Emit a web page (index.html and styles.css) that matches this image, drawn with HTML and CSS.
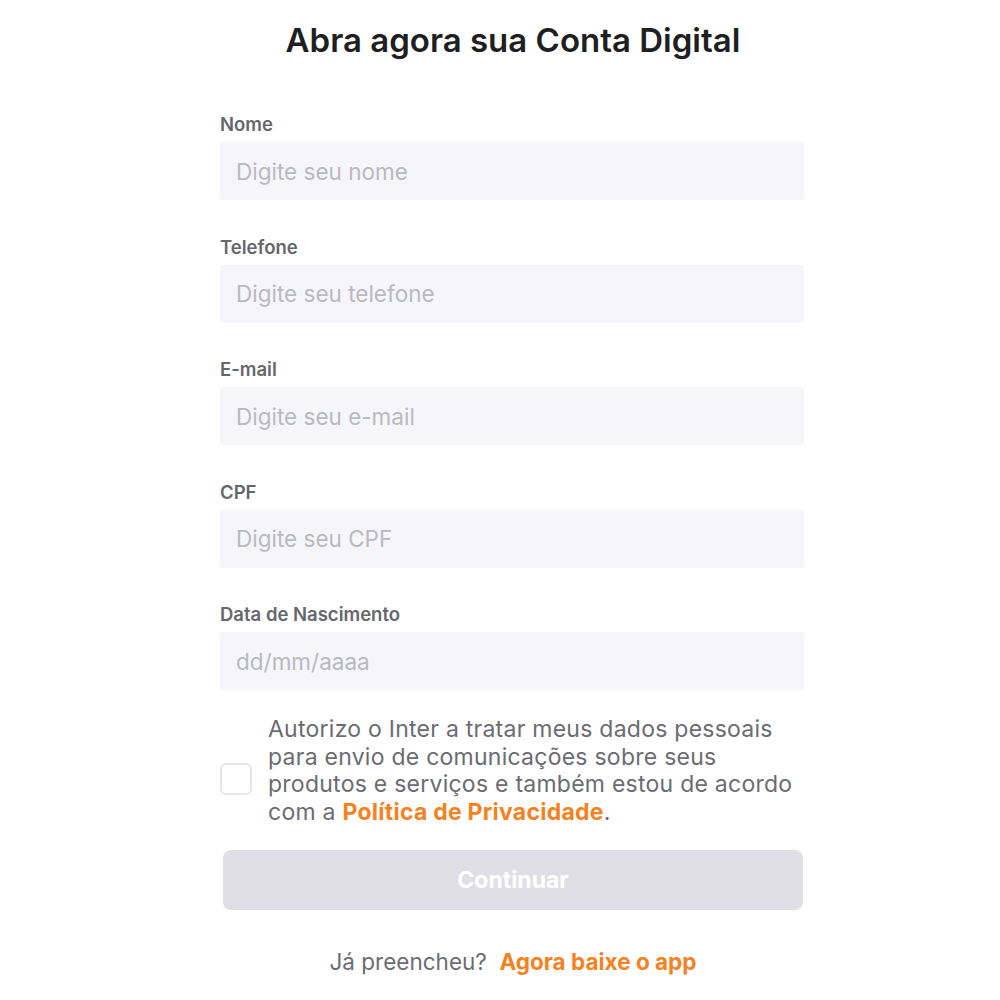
FILE: index.html
```html
<!DOCTYPE html>
<html lang="pt-BR">
<head>
<meta charset="utf-8">
<title>Abra agora sua Conta Digital</title>
<link rel="stylesheet" href="styles.css">
</head>
<body>
<main class="page">
  <h1 class="title">Abra agora sua Conta Digital</h1>
  <form class="form">
    <div class="field">
      <label class="label">Nome</label>
      <div class="input">Digite seu nome</div>
    </div>
    <div class="field">
      <label class="label">Telefone</label>
      <div class="input">Digite seu telefone</div>
    </div>
    <div class="field">
      <label class="label">E-mail</label>
      <div class="input">Digite seu e-mail</div>
    </div>
    <div class="field">
      <label class="label">CPF</label>
      <div class="input">Digite seu CPF</div>
    </div>
    <div class="field last">
      <label class="label">Data de Nascimento</label>
      <div class="input">dd/mm/aaaa</div>
    </div>
    <div class="consent">
      <span class="checkbox"></span>
      <p class="consent-text">Autorizo o Inter a tratar meus dados pessoais<br>para envio de comunicações sobre seus<br>produtos e serviços e também estou de acordo<br>com a <a class="link">Política de Privacidade</a>.</p>
    </div>
    <div class="button">Continuar</div>
    <p class="footer">Já preencheu?&nbsp; <a class="link">Agora baixe o app</a></p>
  </form>
</main>
</body>
</html>
```
FILE: styles.css
```css
* { box-sizing: border-box; }
html, body { margin: 0; padding: 0; background: #ffffff; }
body { font-family: Inter, "Noto Sans", sans-serif; }
.page {
  width: 1000px;
  padding-left: 26px;
  display: flex;
  flex-direction: column;
  align-items: center;
}
.title {
  margin: 20px 0 0 0;
  font-size: 33px;
  line-height: 40px;
  font-weight: 600;
  color: #1f1f22;
}
.form {
  width: 586px;
  margin-top: 53px;
  display: flex;
  flex-direction: column;
}
.field {
  display: flex;
  flex-direction: column;
  margin-bottom: 35.5px;
}
.field.last { margin-bottom: 26px; }
.label {
  font-size: 18.5px;
  line-height: 22px;
  font-weight: 600;
  color: #66676d;
  margin-bottom: 7px;
}
.input {
  height: 58px;
  width: 584px;
  background: #f5f5fa;
  border-radius: 4px;
  padding: 0 16px;
  display: flex;
  align-items: center;
  font-size: 22.5px;
  color: #b9bac1;
}
.consent {
  display: flex;
  align-items: center;
  gap: 16px;
}
.checkbox {
  flex: none;
  width: 32px;
  height: 32px;
  margin-top: 15px;
  border: 2px solid #e6e6ea;
  border-radius: 6px;
}
.consent-text {
  margin: 0;
  font-size: 23px;
  line-height: 27.5px;
  letter-spacing: 0.25px;
  color: #6b6c72;
  white-space: nowrap;
}
.link {
  color: #f5821f;
  font-weight: 700;
}
.button {
  margin: 24px 3px 0 3px;
  width: 580px;
  height: 60px;
  background: #dfdfe5;
  border-radius: 8px;
  display: flex;
  align-items: center;
  justify-content: center;
  color: #ffffff;
  font-weight: 700;
  font-size: 23px;
}
.footer {
  margin: 38px 0 0 0;
  text-align: center;
  font-size: 22.5px;
  line-height: 28px;
  color: #6b6c72;
}
```
